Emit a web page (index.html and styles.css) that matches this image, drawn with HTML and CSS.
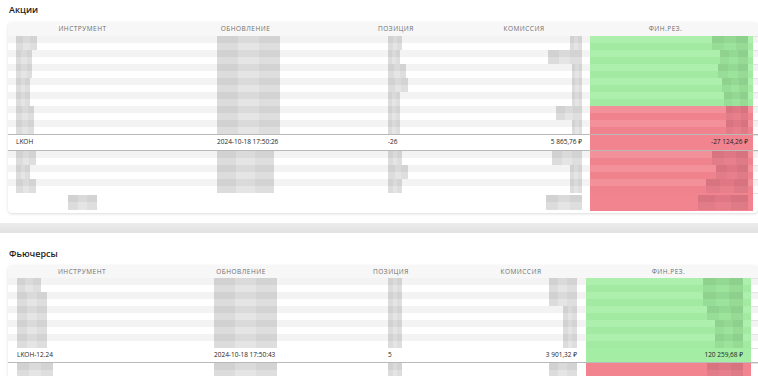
FILE: index.html
```html
<!DOCTYPE html>
<html lang="ru">
<head>
<meta charset="utf-8">
<title>Позиции</title>
<link rel="stylesheet" href="styles.css">
</head>
<body>
<div class="page">
  <h2 class="title t-first">Акции</h2>
  <div class="card t1">
    <div class="thead">
      <div class="th">Инструмент</div><div class="th">Обновление</div><div class="th">Позиция</div><div class="th">Комиссия</div><div class="th">Фин.рез.</div><div></div>
    </div>
    <div class="tr blur"><div class="td c1"><span class="bl w21"></span></div><div class="td c2"><span class="bl w63"></span></div><div class="td c3"><span class="bl w14"></span></div><div class="td c4"><span class="bl w12"></span></div><div class="td c5 pos"><span class="bl g w36"></span></div><div class="td c6"></div></div>
    <div class="tr blur"><div class="td c1"><span class="bl w16"></span></div><div class="td c2"><span class="bl w63"></span></div><div class="td c3"><span class="bl w12"></span></div><div class="td c4"><span class="bl w34"></span></div><div class="td c5 pos"><span class="bl g w28"></span></div><div class="td c6"></div></div>
    <div class="tr blur"><div class="td c1"><span class="bl w16"></span></div><div class="td c2"><span class="bl w63"></span></div><div class="td c3"><span class="bl w18"></span></div><div class="td c4"><span class="bl w10"></span></div><div class="td c5 pos"><span class="bl g w30"></span></div><div class="td c6"></div></div>
    <div class="tr blur"><div class="td c1"><span class="bl w14"></span></div><div class="td c2"><span class="bl w63"></span></div><div class="td c3"><span class="bl w20"></span></div><div class="td c4"><span class="bl w10"></span></div><div class="td c5 pos"><span class="bl g w26"></span></div><div class="td c6"></div></div>
    <div class="tr blur"><div class="td c1"><span class="bl w14"></span></div><div class="td c2"><span class="bl w63"></span></div><div class="td c3"><span class="bl w12"></span></div><div class="td c4"><span class="bl w10"></span></div><div class="td c5 pos"><span class="bl g w24"></span></div><div class="td c6"></div></div>
    <div class="tr blur"><div class="td c1"><span class="bl w18"></span></div><div class="td c2"><span class="bl w63"></span></div><div class="td c3"><span class="bl w12"></span></div><div class="td c4"><span class="bl w26"></span></div><div class="td c5 neg"><span class="bl r w22"></span></div><div class="td c6"></div></div>
    <div class="tr blur"><div class="td c1"><span class="bl w18"></span></div><div class="td c2"><span class="bl w63"></span></div><div class="td c3"><span class="bl w12"></span></div><div class="td c4"><span class="bl w10"></span></div><div class="td c5 neg"><span class="bl r w22"></span></div><div class="td c6"></div></div>
    <div class="tr hl">
      <div class="td c1">LKOH</div>
      <div class="td c2">2024-10-18 17:50:26</div>
      <div class="td c3">-26</div>
      <div class="td c4">5&nbsp;865,76 ₽</div>
      <div class="td c5 neg">-27&nbsp;124,26 ₽</div>
      <div class="td c6"></div>
    </div>
    <div class="tr blur"><div class="td c1"><span class="bl w20"></span></div><div class="td c2"><span class="bl w57"></span></div><div class="td c3"><span class="bl w14"></span></div><div class="td c4"><span class="bl w30"></span></div><div class="td c5 neg"><span class="bl r w36"></span></div><div class="td c6"></div></div>
    <div class="tr blur"><div class="td c1"><span class="bl w14"></span></div><div class="td c2"><span class="bl w57"></span></div><div class="td c3"><span class="bl w20"></span></div><div class="td c4"><span class="bl w12"></span></div><div class="td c5 neg"><span class="bl r w32"></span></div><div class="td c6"></div></div>
    <div class="tr blur"><div class="td c1"><span class="bl w20"></span></div><div class="td c2"><span class="bl w57"></span></div><div class="td c3"><span class="bl w14"></span></div><div class="td c4"><span class="bl w12"></span></div><div class="td c5 neg"><span class="bl r w42"></span></div><div class="td c6"></div></div>
    <div class="tr tall">
      <div class="td c1"><span class="bl tallbl w29 shift"></span></div>
      <div class="td c2"></div>
      <div class="td c3"></div>
      <div class="td c4"><span class="bl tallbl w36"></span></div>
      <div class="td c5 neg last"><span class="bl r tallbl w50"></span></div>
      <div class="td c6"></div>
    </div>
  </div>

  <div class="band"></div>

  <h2 class="title t-second">Фьючерсы</h2>
  <div class="card t2">
    <div class="thead">
      <div class="th">Инструмент</div><div class="th">Обновление</div><div class="th">Позиция</div><div class="th">Комиссия</div><div class="th">Фин.рез.</div><div></div>
    </div>
    <div class="tr blur"><div class="td c1"><span class="bl w24"></span></div><div class="td c2"><span class="bl w63"></span></div><div class="td c3"><span class="bl w14"></span></div><div class="td c4"><span class="bl w28"></span></div><div class="td c5 pos"><span class="bl g w40"></span></div><div class="td c6"></div></div>
    <div class="tr blur"><div class="td c1"><span class="bl w30"></span></div><div class="td c2"><span class="bl w63"></span></div><div class="td c3"><span class="bl w14"></span></div><div class="td c4"><span class="bl w28"></span></div><div class="td c5 pos"><span class="bl g w40"></span></div><div class="td c6"></div></div>
    <div class="tr blur"><div class="td c1"><span class="bl w30"></span></div><div class="td c2"><span class="bl w63"></span></div><div class="td c3"><span class="bl w14"></span></div><div class="td c4"><span class="bl w14"></span></div><div class="td c5 pos"><span class="bl g w36"></span></div><div class="td c6"></div></div>
    <div class="tr blur"><div class="td c1"><span class="bl w30"></span></div><div class="td c2"><span class="bl w63"></span></div><div class="td c3"><span class="bl w14"></span></div><div class="td c4"><span class="bl w14"></span></div><div class="td c5 pos"><span class="bl g w28"></span></div><div class="td c6"></div></div>
    <div class="tr blur"><div class="td c1"><span class="bl w30"></span></div><div class="td c2"><span class="bl w63"></span></div><div class="td c3"><span class="bl w14"></span></div><div class="td c4"><span class="bl w14"></span></div><div class="td c5 pos"><span class="bl g w28"></span></div><div class="td c6"></div></div>
    <div class="tr hl hl2">
      <div class="td c1">LKOH-12.24</div>
      <div class="td c2">2024-10-18 17:50:43</div>
      <div class="td c3">5</div>
      <div class="td c4">3&nbsp;901,32 ₽</div>
      <div class="td c5 pos">120&nbsp;259,68 ₽</div>
      <div class="td c6"></div>
    </div>
    <div class="tr plain"><div class="td c1"><span class="bl w36"></span></div><div class="td c2"><span class="bl w63"></span></div><div class="td c3"><span class="bl w14"></span></div><div class="td c4"><span class="bl w28"></span></div><div class="td c5 neg"><span class="bl r w36"></span></div><div class="td c6"></div></div>
  </div>
</div>
</body>
</html>
```

FILE: styles.css
```css
html, body {
  margin: 0;
  padding: 0;
  background: #ffffff;
  overflow: hidden;
}

body {
  font-family: "Open Sans", "Noto Sans", sans-serif;
  color: #2b2b2b;
  width: 758px;
  height: 376px;
}

.page {
  padding-left: 8px;
}

.title {
  margin: 0;
  font-size: 9px;
  font-weight: 600;
  line-height: 12px;
  color: #1f1f1f;
  padding-left: 1px;
}

.t-first {
  padding-top: 4px;
  height: 18px;
}

.t-second {
  padding-top: 15px;
  height: 17px;
}

.card {
  width: 750px;
  background: #fff;
  border-radius: 4px;
  box-shadow: 0 1px 3px rgba(0, 0, 0, 0.14);
  overflow: hidden;
}

.t1 {
  --cols: 161px 165px 136px 120px 163px 5px;
  --p1: 8px;
  --p2: 48px;
  --p3: 54px;
  --p4: 8px;
  --p5: 5px;
}

.t2 {
  --cols: 160px 158px 142px 118px 165px 7px;
  --p1: 9px;
  --p2: 46px;
  --p3: 62px;
  --p4: 9px;
  --p5: 8px;
  border-radius: 4px 4px 0 0;
}

.thead {
  display: grid;
  grid-template-columns: var(--cols);
  height: 14px;
  background: #f7f7f7;
  font-size: 6.5px;
  font-weight: 400;
  letter-spacing: 0.5px;
  text-transform: uppercase;
  color: #6e6e6e;
  line-height: 14px;
  text-align: center;
}

.th {
  padding-right: 12px;
  white-space: nowrap;
}

.t2 .th:nth-child(5) {
  padding-right: 0;
}

.t2 .thead {
  height: 13px;
  line-height: 13px;
}

.tr {
  display: grid;
  grid-template-columns: var(--cols);
  height: 14px;
  font-size: 6.5px;
  line-height: 14px;
}

.tr.blur {
  background: linear-gradient(#f3f3f3 0 7px, #ffffff 7px 14px);
}

.tr.hl {
  height: 15px;
  border-top: 1px solid #b9b9b9;
  border-bottom: 1px solid #b9b9b9;
  line-height: 14px;
  color: #1e1e1e;
}

.tr.hl2 {
  border-top: none;
  height: 14px;
}

.tr.plain {
  border-bottom: 1px solid #c4c4c4;
}

.tr.tall {
  height: 20px;
}

.td {
  overflow: hidden;
  white-space: nowrap;
}

.c1 { padding-left: var(--p1); }
.c2 { padding-left: var(--p2); }
.c3 { padding-left: var(--p3); }
.c4 { padding-right: var(--p4); text-align: right; }
.c5 { padding-right: var(--p5); text-align: right; }

.c6 {
  background: linear-gradient(#e3e3e3 0 1px, transparent 1px);
}

.pos {
  background-color: #a4eda4;
}

.neg {
  background-color: #f2848f;
}

.blur .pos,
.blur .neg {
  background-image: linear-gradient(rgba(255, 255, 255, 0.1) 0 7px, rgba(0, 0, 0, 0.012) 7px 14px);
}

.neg.last {
  margin-bottom: 2px;
}

.bl {
  display: inline-block;
  vertical-align: top;
  height: 14px;
  background:
    linear-gradient(90deg, rgba(0, 0, 0, 0.04) 0 33%, transparent 33% 66%, rgba(0, 0, 0, 0.03) 66% 100%),
    linear-gradient(#dadada 0 7px, #e5e5e5 7px 14px);
}

.bl.g {
  background:
    linear-gradient(90deg, rgba(0, 0, 0, 0.03) 0 33%, transparent 33% 66%, rgba(0, 0, 0, 0.04) 66% 100%),
    linear-gradient(#93d993 0 7px, #9ce39c 7px 14px);
}

.bl.r {
  background:
    linear-gradient(90deg, rgba(0, 0, 0, 0.03) 0 33%, transparent 33% 66%, rgba(0, 0, 0, 0.04) 66% 100%),
    linear-gradient(#df7884 0 7px, #e8808c 7px 14px);
}

.bl.tallbl {
  height: 15px;
  margin-top: 2px;
}

.shift {
  margin-left: 52px;
}

.w10 { width: 10px; }
.w12 { width: 12px; }
.w14 { width: 14px; }
.w16 { width: 16px; }
.w18 { width: 18px; }
.w20 { width: 20px; }
.w21 { width: 21px; }
.w22 { width: 22px; }
.w24 { width: 24px; }
.w26 { width: 26px; }
.w28 { width: 28px; }
.w29 { width: 29px; }
.w30 { width: 30px; }
.w32 { width: 32px; }
.w34 { width: 34px; }
.w36 { width: 36px; }
.w40 { width: 40px; }
.w42 { width: 42px; }
.w50 { width: 50px; }
.w57 { width: 57px; }
.w63 { width: 63px; }

.band {
  margin-top: 10px;
  margin-left: -8px;
  width: 758px;
  height: 10px;
  background: linear-gradient(#ececec, #e2e2e2);
}
```
